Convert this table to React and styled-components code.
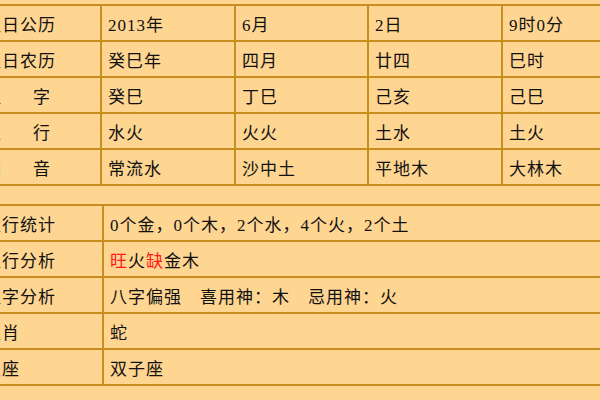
import styled, { createGlobalStyle } from "styled-components";

// ===== Styling =====

const line = "#c88e1e";

const Global = createGlobalStyle`
  html, body {
    margin: 0;
    padding: 0;
    background: #ffd592;
    overflow: hidden;
  }
  body {
    width: 600px;
    height: 400px;
  }
`;

const Sheet = styled.div`
  margin-left: -22px;
  padding-top: 4px;
  width: 700px;
  font-family: "Liberation Serif", "Noto Sans CJK SC", serif;
  font-size: 17px;
  letter-spacing: 1px;
  color: #111;
`;

const Section = styled.div`
  border-top: 2px solid ${line};
`;

const Row = styled.div`
  display: grid;
  grid-template-columns: ${({ $cols }) => $cols};
  height: 36px;
  box-sizing: border-box;
  border-bottom: 2px solid ${line};
`;

const Cell = styled.div`
  display: flex;
  align-items: center;
  padding-left: 6px;
  white-space: nowrap;
  border-right: ${({ $last }) => ($last ? "none" : `2px solid ${line}`)};
`;

// two-character labels spread over the width of four characters
const Spread = styled.span`
  display: inline-flex;
  justify-content: space-between;
  width: 66px;
  letter-spacing: 0;
`;

const Red = styled.span`
  color: #ff1a1a;
`;

const Spacer = styled.div`
  height: 18px;
`;

// ===== Data =====

const spread = (a, b) => (
  <Spread>
    <span>{a}</span>
    <span>{b}</span>
  </Spread>
);

const topRows = [
  ["生日公历", "2013年", "6月", "2日", "9时0分"],
  ["生日农历", "癸巳年", "四月", "廿四", "巳时"],
  [spread("八", "字"), "癸巳", "丁巳", "己亥", "己巳"],
  [spread("五", "行"), "水火", "火火", "土水", "土火"],
  [spread("纳", "音"), "常流水", "沙中土", "平地木", "大林木"],
];

const bottomRows = [
  ["五行统计", "0个金，0个木，2个水，4个火，2个土"],
  [
    "五行分析",
    <>
      <Red>旺</Red>火<Red>缺</Red>金木
    </>,
  ],
  ["八字分析", "八字偏强　喜用神：木　忌用神：火"],
  ["生肖", "蛇"],
  ["星座", "双子座"],
];

// ===== Logic =====

const App = () => {
  return (
    <>
      <Global />
      <Sheet>
        <Section>
          {topRows.map((row, i) => (
            <Row key={i} $cols="124px 134px 133px 134px 134px">
              {row.map((cell, j) => (
                <Cell key={j}>{cell}</Cell>
              ))}
            </Row>
          ))}
        </Section>

        <Spacer />

        <Section>
          {bottomRows.map(([label, value], i) => (
            <Row key={i} $cols="126px 1fr">
              <Cell>{label}</Cell>
              <Cell $last>{value}</Cell>
            </Row>
          ))}
        </Section>
      </Sheet>
    </>
  );
};

export default App;
